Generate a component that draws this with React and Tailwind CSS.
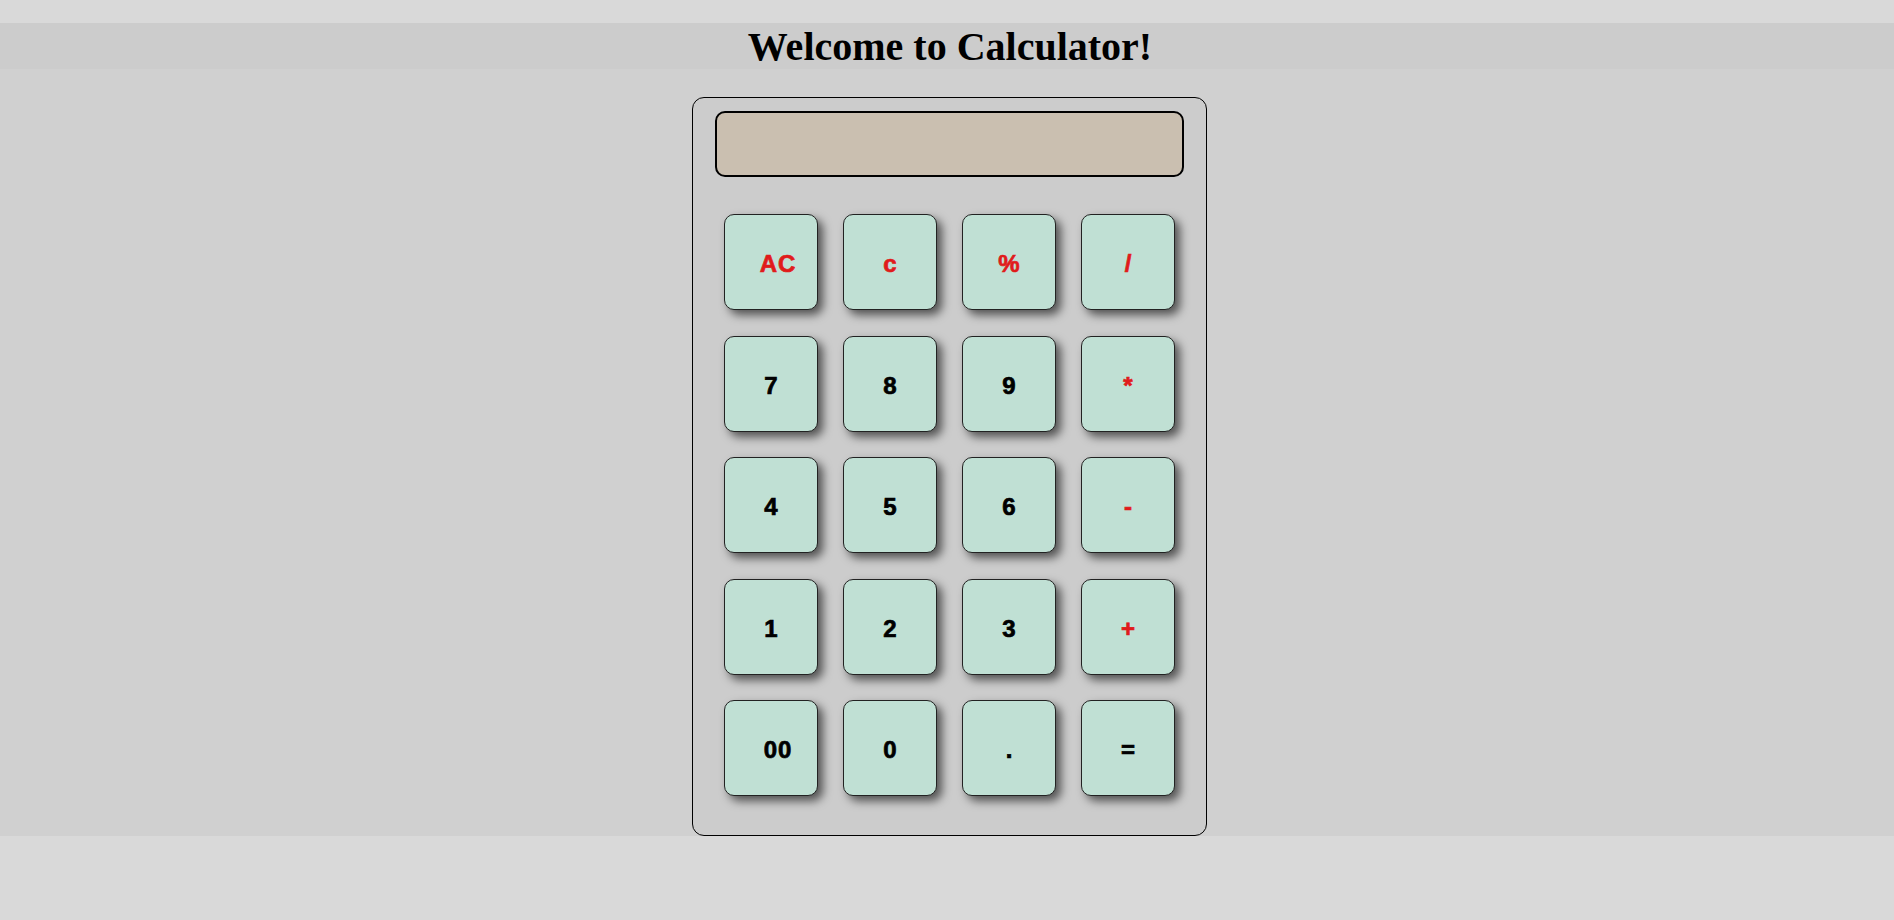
import React, { useState } from "react";

// Calculator keys, row by row
const keys = [
  { label: "AC", op: true, wide: true },
  { label: "c", op: true },
  { label: "%", op: true },
  { label: "/", op: true },
  { label: "7" },
  { label: "8" },
  { label: "9" },
  { label: "*", op: true },
  { label: "4" },
  { label: "5" },
  { label: "6" },
  { label: "-", op: true },
  { label: "1" },
  { label: "2" },
  { label: "3" },
  { label: "+", op: true },
  { label: "00", wide: true },
  { label: "0" },
  { label: "." },
  { label: "=" },
];

const App = () => {
  const [value, setValue] = useState("");

  const press = (label) => {
    if (label === "AC") return setValue("");
    if (label === "c") return setValue((v) => v.slice(0, -1));
    if (label === "=") {
      try {
        // eslint-disable-next-line no-new-func
        setValue(String(Function(`return (${value})`)()));
      } catch (e) {
        setValue("Error");
      }
      return;
    }
    setValue((v) => v + label);
  };

  return (
    <div className="min-h-screen bg-[#d9d9d9] pt-[23px]">
      <h1
        className="bg-[#cccccc] pl-[6px] pt-[1px] text-center text-[40px] font-bold leading-[45px] text-black"
        style={{ fontFamily: '"Liberation Serif", "Times New Roman", serif' }}
      >
        Welcome to Calculator!
      </h1>

      <div className="flex justify-center bg-[#d0d0d0] pl-[5px] pt-[28px]">
        <div className="w-[515px] rounded-[12px] border border-black bg-[#cccccc] px-[22px] pt-[13px] pb-[39px]">
          {/* Display */}
          <div className="flex h-[66px] w-[469px] items-center justify-end rounded-[10px] border-2 border-black bg-[#cabfb0] px-4 text-[28px]">
            {value}
          </div>

          {/* Keys */}
          <div className="mt-[37px] grid grid-cols-[repeat(4,94px)] gap-x-[25px] gap-y-[25.5px] pl-[9px]">
            {keys.map((k) => (
              <button
                key={k.label}
                onClick={() => press(k.label)}
                className={`flex h-[96px] w-[94px] items-center justify-center rounded-[10px] border border-[#222] bg-[#c0e0d4] pt-[4px] text-[24px] font-bold shadow-[5px_5px_10px_rgba(0,0,0,0.6)] [-webkit-text-stroke:0.7px_currentColor] ${
                  k.op ? "text-[#e01b1b]" : "text-black"
                } ${k.wide ? "pl-[14px] tracking-[1px]" : ""}`}
                style={{ fontFamily: '"Liberation Sans", Arial, sans-serif' }}
              >
                {k.label}
              </button>
            ))}
          </div>
        </div>
      </div>
    </div>
  );
};

export default App;
